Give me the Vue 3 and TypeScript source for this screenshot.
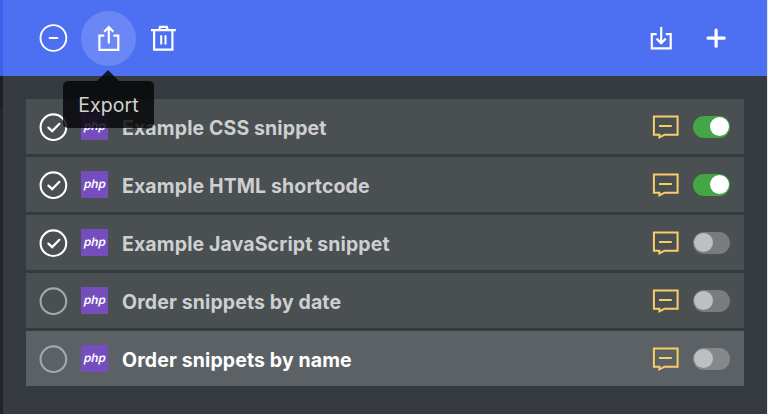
<script setup lang="ts">
import { ref } from 'vue'

interface Snippet {
  name: string
  selected: boolean
  enabled: boolean
  active?: boolean
}

const snippets = ref<Snippet[]>([
  { name: 'Example CSS snippet', selected: true, enabled: true },
  { name: 'Example HTML shortcode', selected: true, enabled: true },
  { name: 'Example JavaScript snippet', selected: true, enabled: false },
  { name: 'Order snippets by date', selected: false, enabled: false },
  { name: 'Order snippets by name', selected: false, enabled: false, active: true },
])
</script>

<template>
  <div class="shell">
    <div class="rail"></div>
    <main class="panel">
      <header class="toolbar">
        <div class="group">
          <button class="tool" aria-label="Deselect">
            <svg width="30" height="30" viewBox="0 0 30 30">
              <circle cx="14.4" cy="15" r="12.9" stroke-width="1.9" />
              <path d="M10.6 15h7.8" stroke-width="2" stroke-linecap="round" />
            </svg>
          </button>
          <button class="tool hovered" aria-label="Export">
            <svg width="30" height="30" viewBox="0 0 30 30">
              <path d="M10.3 12.6H5.4v14.2h18.9V12.6h-4.9M14.8 20.5V4.8M10.2 8.7l4.6-4.6 4.6 4.6" stroke-width="2.2" />
            </svg>
            <span class="tip">Export</span>
          </button>
          <button class="tool" aria-label="Delete">
            <svg width="30" height="30" viewBox="0 0 30 30">
              <path d="M2 7.2h24.8M5.1 7.2v19.4h18.3V7.2M10 7.2l1-3.4h6.8l1 3.4" stroke-width="2.2" />
              <path d="M12.2 12.2v9.2M16.5 12.2v9.2" stroke-width="2" />
            </svg>
          </button>
        </div>
        <div class="group">
          <button class="tool" aria-label="Import">
            <svg width="30" height="30" viewBox="0 0 30 30">
              <path d="M9.7 11.2H4.8v14.2h18.9V11.2h-4.9M14.2 4v15.5M9.6 15.6l4.6 4.6 4.6-4.6" stroke-width="2.2" />
            </svg>
          </button>
          <button class="tool" aria-label="Add">
            <svg width="30" height="30" viewBox="0 0 30 30">
              <path d="M14.1 7v16.2M6 15.1h16.2" stroke-width="3.2" stroke-linecap="round" />
            </svg>
          </button>
        </div>
      </header>
      <ul class="list">
        <li v-for="s in snippets" :key="s.name" class="row" :class="{ active: s.active }">
          <svg class="check" :class="{ selected: s.selected }" width="30" height="30" viewBox="0 0 30 30">
            <circle cx="15.4" cy="15.2" r="12.8" stroke-width="2.1" />
            <path v-if="s.selected" d="M10.4 15.6l3.8 3.5 7.2-7.3" stroke-width="2.2" stroke-linecap="round" />
          </svg>
          <span class="lang"><span class="lang-text">php</span></span>
          <span class="name">{{ s.name }}</span>
          <svg class="note" width="28" height="26" viewBox="0 0 28 26">
            <path d="M2.9 2.6h23.7v18.1H13.6L8.4 23.4v-2.7H2.9zM8 12h12.8" stroke-width="2" />
          </svg>
          <span class="toggle" :class="{ on: s.enabled }"><span class="knob"></span></span>
        </li>
      </ul>
    </main>
  </div>
</template>

<style>
body {
  overflow: hidden;
}
</style>

<style scoped>
.shell {
  display: flex;
  box-sizing: border-box;
  width: 100vw;
  height: 100vh;
  border-right: 1px solid #e4e5e6;
  font-family: Inter, 'Liberation Sans', sans-serif;
  background: #363a41;
}
.rail {
  width: 3px;
  flex: none;
  background: linear-gradient(#3d61ef 0 76px, #1c1e20 76px 107px, #212429 107px);
}
.panel {
  flex: 1;
  min-width: 0;
}
.toolbar {
  display: flex;
  justify-content: space-between;
  align-items: center;
  box-sizing: border-box;
  height: 76px;
  padding: 0 23px;
  background: #4d70f3;
}
.group {
  display: flex;
}
.tool {
  position: relative;
  display: grid;
  place-items: center;
  width: 55px;
  height: 55px;
  padding: 0;
  border: 0;
  border-radius: 50%;
  background: none;
  font: inherit;
}
.hovered {
  background: #6a87f5;
}
svg {
  display: block;
  flex: none;
  fill: none;
  stroke: #fff;
}
.tip {
  position: absolute;
  z-index: 2;
  top: 70px;
  left: -18px;
  width: 91px;
  height: 47px;
  border-radius: 5px;
  background: rgba(5, 5, 6, 0.82);
  color: #d2d2d2;
  font-size: 19.5px;
  line-height: 48px;
  text-align: center;
  letter-spacing: 0.1px;
}
.tip::before {
  content: '';
  position: absolute;
  bottom: 100%;
  left: 34px;
  border: 11.5px solid transparent;
  border-top: 0;
  border-bottom: 11px solid rgba(5, 5, 6, 0.82);
}
.list {
  display: grid;
  gap: 3px;
  margin: 0;
  padding: 23px 23px 0;
  list-style: none;
}
.row {
  display: flex;
  align-items: center;
  box-sizing: border-box;
  height: 55px;
  padding: 0 14px 0 12.5px;
  background: #4a4f52;
  color: #cecfd0;
}
.row.active {
  background: #5c6165;
  color: #fff;
}
.check {
  margin-left: -0.5px;
  stroke: #a5a8aa;
}
.check.selected {
  stroke: #fff;
}
.lang {
  display: grid;
  place-items: center;
  width: 27px;
  height: 27px;
  margin-left: 13px;
  background: #754dbd;
  color: #fff;
}
.lang-text {
  font-size: 11.7px;
  font-weight: 600;
  line-height: 27px;
  transform: translateY(-0.5px) skewX(-12deg);
}
.name {
  flex: 1;
  padding: 2px 0 0 14px;
  font-size: 19.5px;
  font-weight: 650;
  letter-spacing: 0.12px;
  white-space: nowrap;
}
.note {
  stroke: #f9ce68;
  margin-right: 14px;
}
.toggle {
  display: flex;
  align-items: center;
  box-sizing: border-box;
  width: 37px;
  height: 22px;
  padding: 0 1px;
  border-radius: 11px;
  background: rgba(255, 255, 255, 0.26);
}
.knob {
  width: 19px;
  height: 19px;
  border-radius: 50%;
  background: #bebfc1;
}
.toggle.on {
  justify-content: flex-end;
  background: #43a747;
}
.toggle.on .knob {
  background: #fff;
}
</style>
